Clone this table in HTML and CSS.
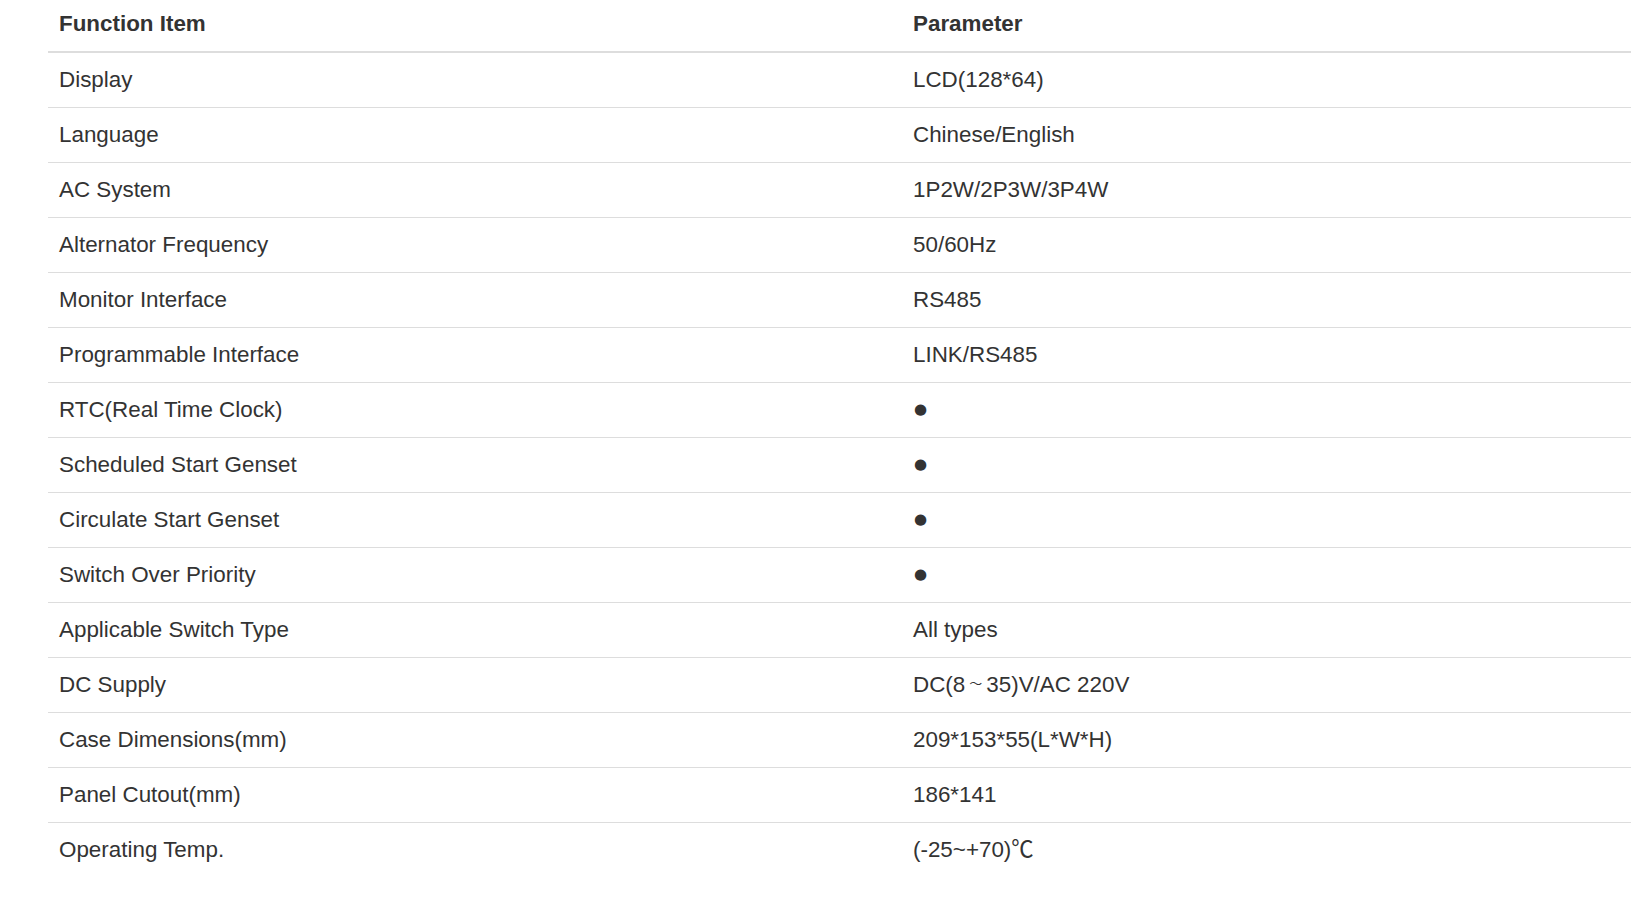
FILE: index.html
```html
<!DOCTYPE html>
<html>
<head>
    <title>Specification</title>
    <link rel="stylesheet" href="styles.css">
</head>
<body>
<div class="spec-wrap">
    <table class="spec-table">
        <thead>
            <tr>
                <th class="col-item">Function Item</th>
                <th>Parameter</th>
            </tr>
        </thead>
        <tbody>
            <tr><td>Display</td><td>LCD(128*64)</td></tr>
            <tr><td>Language</td><td>Chinese/English</td></tr>
            <tr><td>AC System</td><td>1P2W/2P3W/3P4W</td></tr>
            <tr><td>Alternator Frequency</td><td>50/60Hz</td></tr>
            <tr><td>Monitor Interface</td><td>RS485</td></tr>
            <tr><td>Programmable Interface</td><td>LINK/RS485</td></tr>
            <tr><td>RTC(Real Time Clock)</td><td><span class="dot">●</span></td></tr>
            <tr><td>Scheduled Start Genset</td><td><span class="dot">●</span></td></tr>
            <tr><td>Circulate Start Genset</td><td><span class="dot">●</span></td></tr>
            <tr><td>Switch Over Priority</td><td><span class="dot">●</span></td></tr>
            <tr><td>Applicable Switch Type</td><td>All types</td></tr>
            <tr><td>DC Supply</td><td>DC(8<span class="tilde">～</span>35)V/AC 220V</td></tr>
            <tr><td>Case Dimensions(mm)</td><td>209*153*55(L*W*H)</td></tr>
            <tr><td>Panel Cutout(mm)</td><td>186*141</td></tr>
            <tr><td>Operating Temp.</td><td>(-25~+70)℃</td></tr>
        </tbody>
    </table>
</div>
</body>
</html>
```

FILE: styles.css
```css
body {
    margin: 0;
    font-family: "Liberation Sans", Arial, "Noto Sans CJK SC", sans-serif;
    background-color: #FFFFFF;
    color: #333333;
    overflow: hidden;
}

.spec-wrap {
    padding-left: 48px;
}

.spec-table {
    width: 100%;
    border-collapse: collapse;
    border-spacing: 0;
    font-size: 22.4px;
    line-height: 32px;
}

.spec-table th {
    text-align: left;
    font-weight: bold;
    padding: 8px 12px 11px 11px;
    border-bottom: 2px solid #DDDDDD;
}

.spec-table td {
    height: 32px;
    padding: 11px 12px 11px 11px;
    border-top: 1px solid #DDDDDD;
}

.spec-table tbody tr:first-child td {
    border-top: none;
}

.col-item {
    width: 831px;
}

.dot {
    font-family: "DejaVu Sans", sans-serif;
    font-size: 15px;
    line-height: 0;
    vertical-align: 3px;
    padding-left: 1px;
}

.tilde {
    font-family: "Noto Sans CJK SC", sans-serif;
    font-size: 13px;
    line-height: 0;
    vertical-align: 4px;
    padding: 0 4px;
}
```
